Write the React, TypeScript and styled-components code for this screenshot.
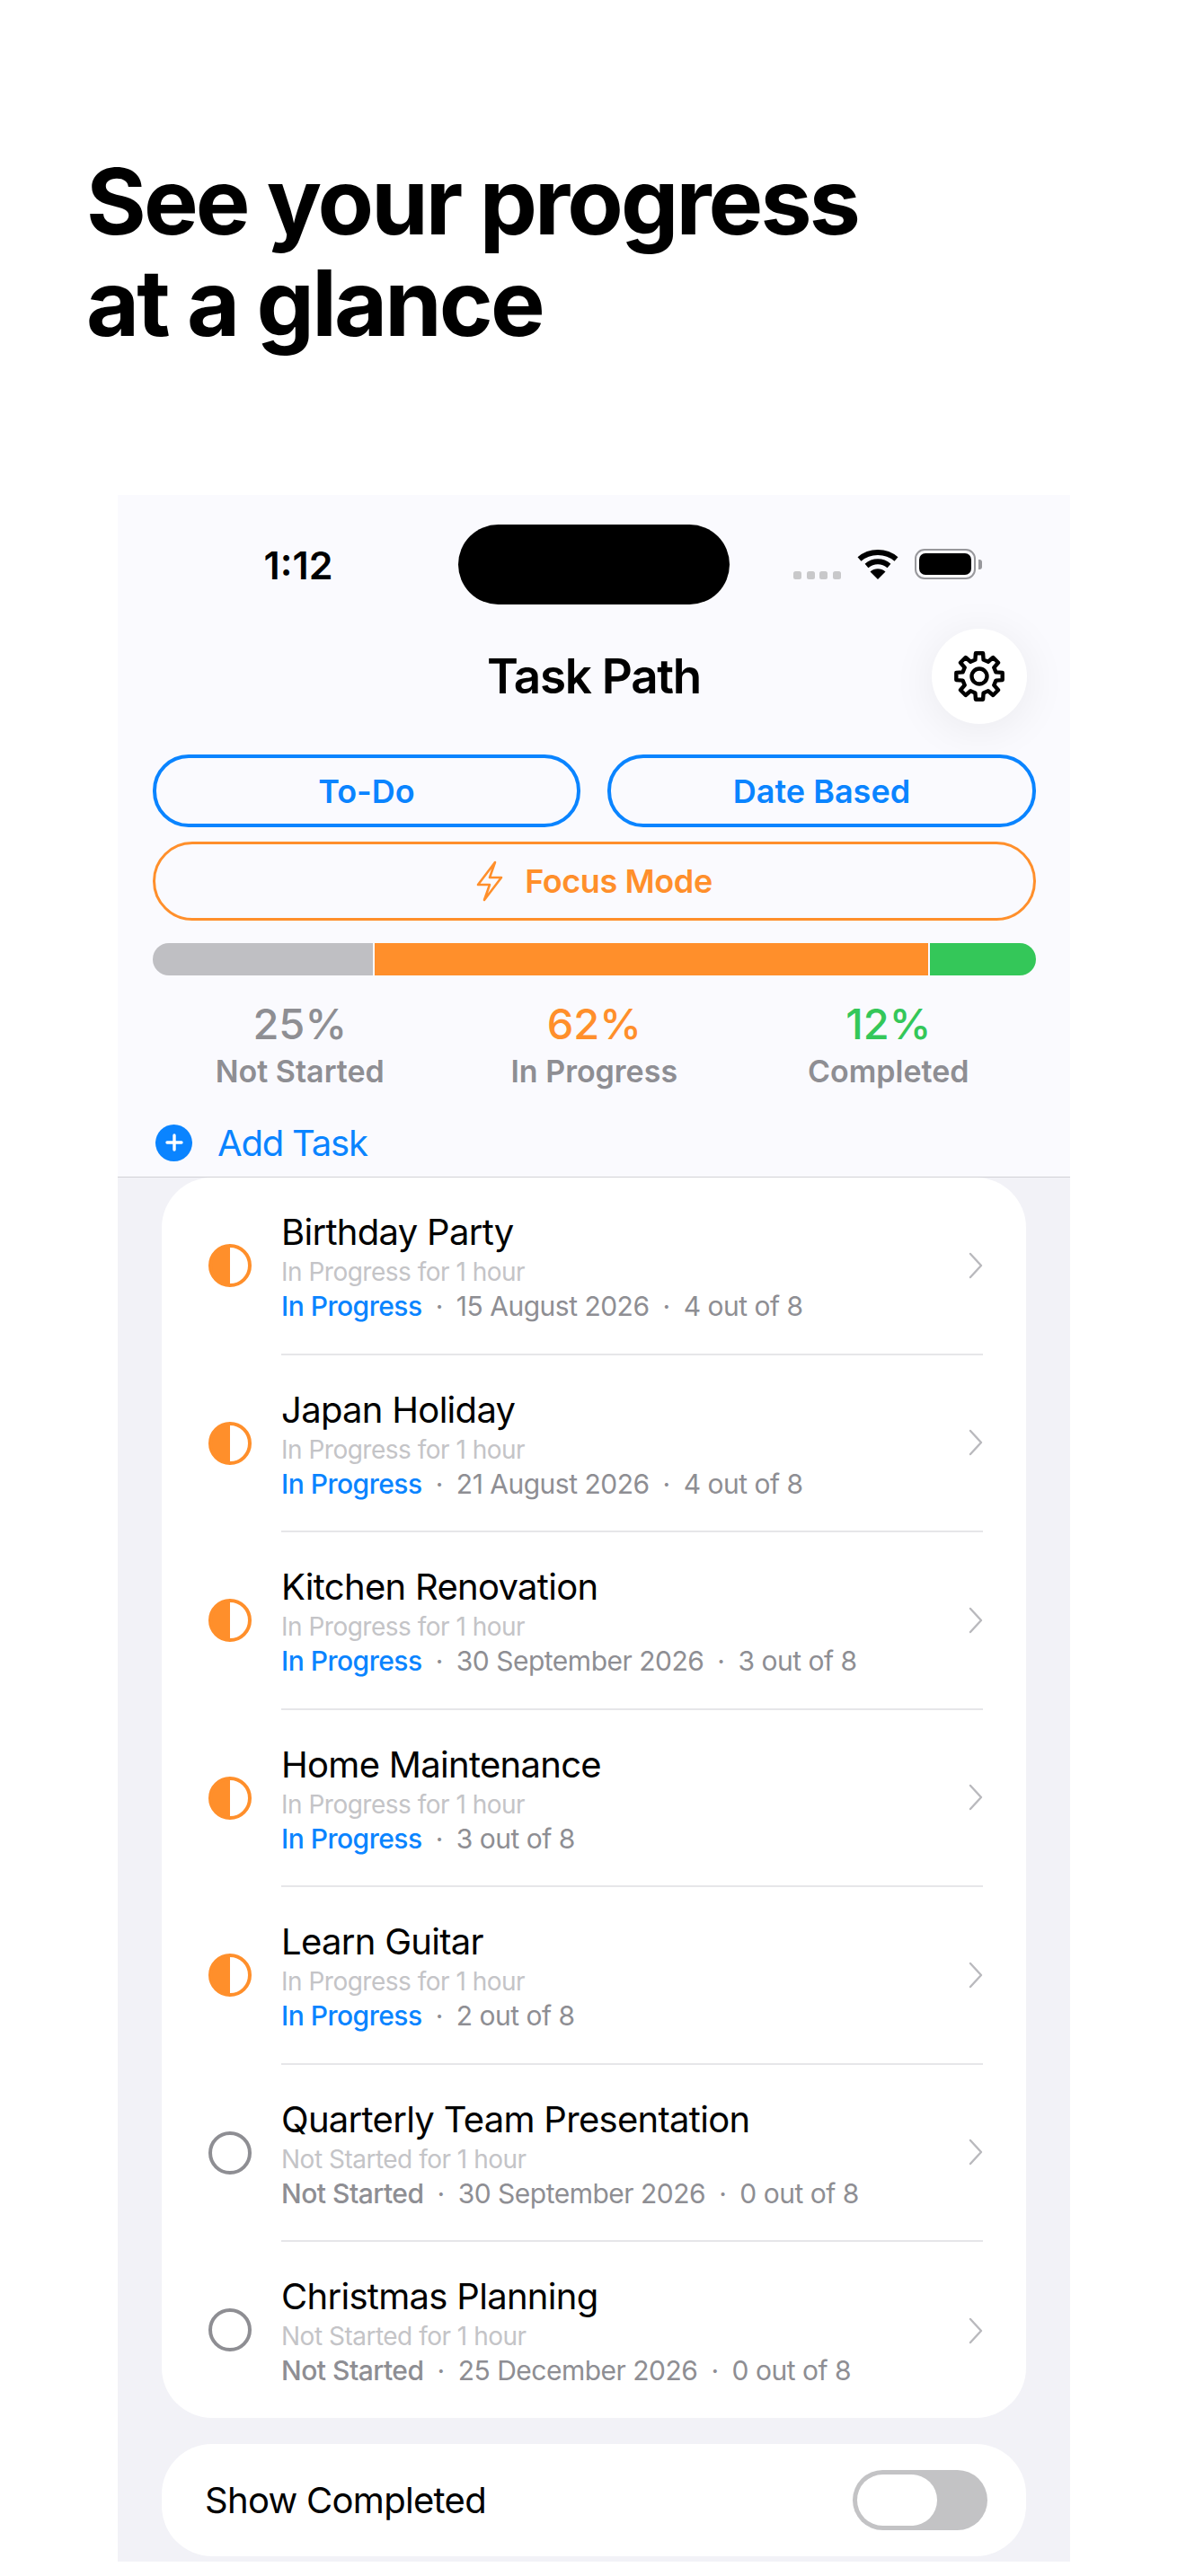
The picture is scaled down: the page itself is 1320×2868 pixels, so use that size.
import React, { FC } from 'react'
import styled, { createGlobalStyle } from 'styled-components'

const colors = {
  blue: '#0a84ff',
  orange: '#ff8f2b',
  green: '#34c759',
  gray: '#8e8e93',
  barGray: '#bfbfc3',
  line: '#e6e6e9',
}

type Status = 'progress' | 'idle'

interface Task {
  title: string
  status: Status
  details: string[]
}

const tasks: Task[] = [
  { title: 'Birthday Party', status: 'progress', details: ['15 August 2026', '4 out of 8'] },
  { title: 'Japan Holiday', status: 'progress', details: ['21 August 2026', '4 out of 8'] },
  { title: 'Kitchen Renovation', status: 'progress', details: ['30 September 2026', '3 out of 8'] },
  { title: 'Home Maintenance', status: 'progress', details: ['3 out of 8'] },
  { title: 'Learn Guitar', status: 'progress', details: ['2 out of 8'] },
  { title: 'Quarterly Team Presentation', status: 'idle', details: ['30 September 2026', '0 out of 8'] },
  { title: 'Christmas Planning', status: 'idle', details: ['25 December 2026', '0 out of 8'] },
]

const stats = [
  { value: '25%', label: 'Not Started', color: colors.gray },
  { value: '62%', label: 'In Progress', color: colors.orange },
  { value: '12%', label: 'Completed', color: colors.green },
]

const statusText: Record<Status, string> = { progress: 'In Progress', idle: 'Not Started' }

// eight teeth, one pointing straight up
const gearPath = () => {
  const point = (radius: number, degrees: number) => {
    const angle = (degrees * Math.PI) / 180
    return `${(30 + radius * Math.cos(angle)).toFixed(2)} ${(30 + radius * Math.sin(angle)).toFixed(2)}`
  }
  const parts: string[] = []
  for (let i = 0; i < 8; i++) {
    const a = i * 45 - 90
    parts.push(point(19, a - 14), point(26, a - 9), point(26, a + 9), point(19, a + 14))
  }
  return `M${parts.join('L')}Z`
}

const Gear: FC = () => (
  <svg width="60" height="60" viewBox="0 0 60 60" fill="none" stroke="#000" strokeWidth="4.4" strokeLinejoin="round">
    <path d={gearPath()} />
    <circle cx="30" cy="30" r="8.5" />
  </svg>
)

const Bolt: FC = () => (
  <svg width="30" height="46" viewBox="-1 -1 30 46" fill="none">
    <path
      d="M20 1L1 26H14L8 43L27 18H14Z"
      stroke={colors.orange}
      strokeWidth="2.6"
      strokeLinejoin="round"
      strokeLinecap="round"
    />
  </svg>
)

const Wifi: FC = () => (
  <svg width="46" height="34" viewBox="0 0 46 34" fill="none">
    <path d="M2.5 11.5C14 1.5 32 1.5 43.5 11.5" stroke="#000" strokeWidth="6" />
    <path d="M10.5 19C18 12.8 28 12.8 35.5 19" stroke="#000" strokeWidth="6" />
    <path d="M23 34L14.5 25.5C19.5 21.3 26.5 21.3 31.5 25.5Z" fill="#000" />
  </svg>
)

const Chevron: FC = () => (
  <svg width="16" height="30" viewBox="0 0 16 30" fill="none">
    <path d="M2 2L14 15L2 28" stroke="#b9b9bd" strokeWidth="2.4" strokeLinecap="round" strokeLinejoin="round" />
  </svg>
)

export default function App() {
  return (
    <>
      <GlobalStyle />
      <Page>
        <Headline>
          See your progress
          <br />
          at a glance
        </Headline>
        <Phone>
          <Header>
            <StatusBar>
              <Clock>1:12</Clock>
              <Island />
              <StatusIcons>
                <SignalDots>
                  <i />
                  <i />
                  <i />
                  <i />
                </SignalDots>
                <Wifi />
                <Battery>
                  <BatteryBody>
                    <BatteryFill />
                  </BatteryBody>
                  <BatteryNub />
                </Battery>
              </StatusIcons>
            </StatusBar>
            <TitleRow>
              <Title>Task Path</Title>
              <GearButton>
                <Gear />
              </GearButton>
            </TitleRow>
            <ModeRow>
              <ModeButton>To-Do</ModeButton>
              <ModeButton>Date Based</ModeButton>
            </ModeRow>
            <FocusButton>
              <Bolt />
              Focus Mode
            </FocusButton>
            <Bar>
              <BarPart $color={colors.barGray} $width={245} />
              <BarPart $color={colors.orange} $width={615} />
              <BarPart $color={colors.green} $width={118} />
            </Bar>
            <Stats>
              {stats.map((stat) => (
                <Stat key={stat.label}>
                  <StatValue $color={stat.color}>{stat.value}</StatValue>
                  <StatLabel>{stat.label}</StatLabel>
                </Stat>
              ))}
            </Stats>
            <AddTask>
              <AddIcon>
                <svg width="22" height="22" viewBox="0 0 22 22">
                  <path d="M11 3V19M3 11H19" stroke="#fff" strokeWidth="3.4" strokeLinecap="round" />
                </svg>
              </AddIcon>
              Add Task
            </AddTask>
          </Header>
          <ListArea>
            <Card>
              {tasks.map((task) => (
                <Row key={task.title}>
                  <Radio $status={task.status} />
                  <RowBody>
                    <RowText>
                      <TaskTitle>{task.title}</TaskTitle>
                      <TaskSince>{statusText[task.status]} for 1 hour</TaskSince>
                      <TaskMeta>
                        <TaskStatus $status={task.status}>{statusText[task.status]}</TaskStatus>
                        {task.details.map((detail) => (
                          <React.Fragment key={detail}>
                            <MetaDot>·</MetaDot>
                            {detail}
                          </React.Fragment>
                        ))}
                      </TaskMeta>
                    </RowText>
                    <Chevron />
                  </RowBody>
                </Row>
              ))}
            </Card>
            <ToggleCard>
              Show Completed
              <Toggle>
                <Knob />
              </Toggle>
            </ToggleCard>
          </ListArea>
        </Phone>
      </Page>
    </>
  )
}

const GlobalStyle = createGlobalStyle`
  html, body {
    margin: 0;
    padding: 0;
    background: #fff;
  }
  body {
    font-family: Inter, "Liberation Sans", sans-serif;
    color: #000;
  }
`

const Page = styled.div`
  width: 1320px;
  height: 2868px;
  overflow: hidden;
  background: #fff;
`

const Headline = styled.h1`
  margin: 0;
  padding: 168px 0 0 96px;
  height: 551px;
  box-sizing: border-box;
  font-size: 102px;
  line-height: 113px;
  font-weight: 700;
  letter-spacing: -2.9px;
`

const Phone = styled.div`
  margin-left: 131px;
  width: 1060px;
  height: 2301px;
  background: #f2f2f7;
`

const Header = styled.div`
  position: relative;
  height: 760px;
  box-sizing: border-box;
  padding: 33px 39px 0;
  background: #fafafe;
  border-bottom: 1px solid #d2d2d6;
`

const StatusBar = styled.div`
  display: grid;
  grid-template-columns: 340px 302px 1fr;
  height: 89px;
  margin: 0 -39px;
  padding: 0 0 0 39px;
`

const Clock = styled.div`
  align-self: center;
  padding-top: 1px;
  text-align: center;
  font-size: 43px;
  font-weight: 600;
  margin-left: -16px;
`

const Island = styled.div`
  background: #000;
  border-radius: 45px;
`

const StatusIcons = styled.div`
  display: flex;
  align-items: flex-end;
  gap: 18px;
  height: 34px;
  margin-top: 27px;
  padding-left: 71px;
`

const SignalDots = styled.div`
  display: flex;
  gap: 5.5px;
  i {
    width: 9px;
    height: 9px;
    border-radius: 2.5px;
    background: #c8c8ca;
  }
`

const Battery = styled.div`
  display: flex;
  align-items: center;
  gap: 3px;
`

const BatteryBody = styled.div`
  width: 68px;
  height: 34px;
  box-sizing: border-box;
  padding: 3px;
  border: 2.5px solid #98989c;
  border-radius: 11px;
`

const BatteryFill = styled.div`
  height: 100%;
  background: #000;
  border-radius: 7px;
`

const BatteryNub = styled.div`
  width: 4px;
  height: 11px;
  background: #98989c;
  border-radius: 0 3px 3px 0;
`

const TitleRow = styled.div`
  position: relative;
  display: flex;
  justify-content: center;
  align-items: center;
  height: 106px;
  margin-top: 27px;
`

const Title = styled.div`
  font-size: 53px;
  font-weight: 600;
  letter-spacing: -1.3px;
`

const GearButton = styled.div`
  position: absolute;
  right: 9px;
  top: 0;
  width: 106px;
  height: 106px;
  display: flex;
  align-items: center;
  justify-content: center;
  border-radius: 50%;
  background: #fff;
  box-shadow: 0 6px 50px rgba(0, 0, 0, 0.07);
`

const ModeRow = styled.div`
  display: grid;
  grid-template-columns: 476px 477px;
  gap: 30px;
  margin-top: 34px;
`

const ModeButton = styled.div`
  height: 81px;
  box-sizing: border-box;
  display: flex;
  align-items: center;
  justify-content: center;
  border: 4px solid ${colors.blue};
  border-radius: 40px;
  color: ${colors.blue};
  font-size: 36px;
  font-weight: 600;
`

const FocusButton = styled.div`
  height: 88px;
  box-sizing: border-box;
  margin-top: 16px;
  width: 983px;
  display: flex;
  align-items: center;
  justify-content: center;
  gap: 24px;
  border: 3.5px solid ${colors.orange};
  border-radius: 44px;
  color: ${colors.orange};
  font-size: 36px;
  font-weight: 600;
  letter-spacing: -0.4px;
`

const Bar = styled.div`
  display: flex;
  gap: 2px;
  width: 983px;
  height: 36px;
  margin-top: 25px;
  border-radius: 18px;
  overflow: hidden;
`

const BarPart = styled.div<{ $color: string; $width: number }>`
  flex: ${({ $width }) => $width} 0 0;
  background: ${({ $color }) => $color};
`

const Stats = styled.div`
  display: grid;
  grid-template-columns: repeat(3, 327.5px);
  margin: 28px 0 0 0;
`

const Stat = styled.div`
  display: flex;
  flex-direction: column;
  align-items: center;
`

const StatValue = styled.div<{ $color: string }>`
  height: 52px;
  line-height: 52px;
  font-size: 47px;
  font-weight: 500;
  color: ${({ $color }) => $color};
`

const StatLabel = styled.div`
  height: 42px;
  line-height: 42px;
  margin-top: 6px;
  font-size: 34px;
  font-weight: 600;
  color: ${colors.gray};
`

const AddTask = styled.div`
  display: flex;
  align-items: center;
  gap: 28px;
  height: 44px;
  margin: 36px 0 0 3px;
  font-size: 40px;
  letter-spacing: -1.2px;
  color: ${colors.blue};
`

const AddIcon = styled.div`
  width: 41px;
  height: 41px;
  border-radius: 50%;
  background: ${colors.blue};
  display: flex;
  align-items: center;
  justify-content: center;
`

const ListArea = styled.div`
  padding: 0 49px;
`

const Card = styled.div`
  background: #fff;
  border-radius: 56px;
  height: 1381px;
  overflow: hidden;
`

const Row = styled.div`
  display: flex;
  align-items: flex-start;
  gap: 33px;
  padding: 0 48px 0 52px;
`

const Radio = styled.div<{ $status: Status }>`
  flex: none;
  width: 48px;
  height: 48px;
  margin-top: 74px;
  box-sizing: border-box;
  border-radius: 50%;
  border: 4px solid ${({ $status }) => ($status === 'progress' ? colors.orange : colors.gray)};
  background: ${({ $status }) =>
    $status === 'progress' ? `linear-gradient(90deg, ${colors.orange} 50%, #fff 50%)` : '#fff'};
`

const RowBody = styled.div`
  flex: 1;
  height: 197.5px;
  box-sizing: border-box;
  display: flex;
  align-items: center;
  justify-content: space-between;
  border-bottom: 2px solid ${colors.line};
  ${Row}:last-child & {
    border-bottom: none;
  }
`

const RowText = styled.div`
  align-self: flex-start;
  padding-top: 37px;
`

const TaskTitle = styled.div`
  height: 48px;
  line-height: 48px;
  font-size: 40px;
  letter-spacing: -0.7px;
`

const TaskSince = styled.div`
  height: 36px;
  line-height: 36px;
  margin-top: 2px;
  font-size: 28px;
  letter-spacing: -0.5px;
  color: #c4c4c7;
`

const TaskMeta = styled.div`
  height: 36px;
  line-height: 36px;
  margin-top: 2px;
  font-size: 30px;
  letter-spacing: -0.5px;
  color: ${colors.gray};
`

const TaskStatus = styled.span<{ $status: Status }>`
  font-weight: 500;
  color: ${({ $status }) => ($status === 'progress' ? colors.blue : colors.gray)};
`

const MetaDot = styled.span`
  margin: 0 15px;
`

const ToggleCard = styled.div`
  display: flex;
  align-items: center;
  justify-content: space-between;
  height: 125px;
  margin-top: 29px;
  padding: 0 43px 0 48px;
  background: #fff;
  border-radius: 56px;
  font-size: 40px;
  letter-spacing: -0.7px;
`

const Toggle = styled.div`
  width: 150px;
  height: 67px;
  box-sizing: border-box;
  padding: 5px;
  background: #c3c3c5;
  border-radius: 34px;
`

const Knob = styled.div`
  width: 89px;
  height: 57px;
  background: #fff;
  border-radius: 29px;
`
